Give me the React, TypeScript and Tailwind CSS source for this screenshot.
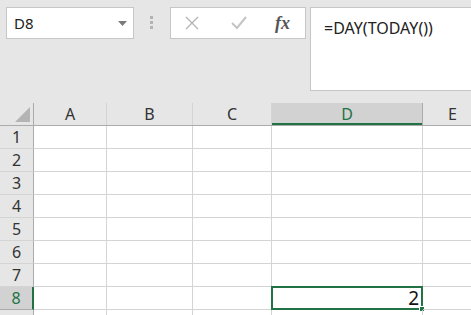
import React from 'react';

// ─── Sheet data ───────────────────────────────────────────────────────────────

const COLS = [
    { key: 'A', w: 'w-[73px]' },
    { key: 'B', w: 'w-[86px]' },
    { key: 'C', w: 'w-[79px]' },
    { key: 'D', w: 'w-[151px]' },
    { key: 'E', w: 'w-[60px]' },
];

const ROWS = [1, 2, 3, 4, 5, 6, 7, 8, 9];

const font = "font-['Noto_Sans','Noto_Sans_CJK_SC',sans-serif]";

// ─── Component ────────────────────────────────────────────────────────────────

const App: React.FC = () => {
    return (
        <div className={`w-[471px] h-[315px] overflow-hidden bg-[#e6e6e6] ${font}`}>

            {/* ── Formula bar ── */}
            <div className="h-[103px] flex items-start pl-[6px] pt-[7px]">
                {/* Name box */}
                <div className="w-[128px] h-[32px] shrink-0 bg-white border border-[#c6c6c6] flex items-center justify-between pl-[7px] pr-[6px]">
                    <span className="text-[15px] text-[#222] leading-none">D8</span>
                    <svg width="9" height="5" viewBox="0 0 9 5"><path d="M0 0h9L4.5 5z" fill="#7a7a7a" /></svg>
                </div>

                {/* Grip */}
                <div className="ml-[16px] mt-[9px] shrink-0 flex flex-col gap-[2px]">
                    <div className="w-[3px] h-[3px] bg-[#b3b3b3]" />
                    <div className="w-[3px] h-[3px] bg-[#b3b3b3]" />
                    <div className="w-[3px] h-[3px] bg-[#b3b3b3]" />
                </div>

                {/* Cancel / enter / fx */}
                <div className="ml-[17px] w-[136px] h-[32px] shrink-0 bg-white border border-[#c6c6c6] flex items-center">
                    <svg className="ml-[14px]" width="14" height="14" viewBox="0 0 14 14">
                        <path d="M1 1l12 12M13 1L1 13" stroke="#b4b4b4" strokeWidth="1.3" fill="none" />
                    </svg>
                    <svg className="ml-[32px]" width="16" height="14" viewBox="0 0 16 14">
                        <path d="M1 7l5 5L15 1" stroke="#c4c4c4" strokeWidth="2" fill="none" />
                    </svg>
                    <span className="ml-[28px] text-[18px] italic font-semibold text-[#555] leading-none font-['Liberation_Serif',serif]">fx</span>
                </div>

                {/* Formula input */}
                <div className="ml-[4px] w-[175px] h-[84px] shrink-0 bg-white border border-[#c6c6c6] pl-[13px] pt-[8px]">
                    <span className="text-[16px] text-[#222] leading-none">=DAY(TODAY())</span>
                </div>
            </div>

            {/* ── Grid ── */}
            <div className="bg-white">
                {/* Column headers */}
                <div className="flex h-[23px] bg-[#e6e6e6] border-b border-[#ababab]">
                    <div className="w-[34px] shrink-0 border-r border-[#ababab] flex items-end justify-end pr-[3px] pb-[3px]">
                        <svg width="15" height="15" viewBox="0 0 15 15"><path d="M15 0v15H0z" fill="#b4b4b4" /></svg>
                    </div>
                    {COLS.map((c) => (
                        <div
                            key={c.key}
                            className={`${c.w} shrink-0 border-r flex items-center justify-center text-[16px] leading-none ${c.key === 'D'
                                ? 'bg-[#d2d2d2] text-[#217346] border-[#ababab] shadow-[inset_0_-2px_0_#217346]'
                                : 'text-[#333] border-[#d4d4d4]'}`}
                        >
                            {c.key}
                        </div>
                    ))}
                </div>

                {/* Rows */}
                {ROWS.map((r) => (
                    <div key={r} className="flex h-[23px]">
                        <div
                            className={`w-[34px] shrink-0 border-b flex items-center justify-center text-[16px] leading-none ${r === 8
                                ? 'bg-[#d2d2d2] text-[#217346] border-[#ababab] border-r-2 border-r-[#217346]'
                                : 'bg-[#e6e6e6] text-[#333] border-[#d4d4d4] border-r border-r-[#ababab]'}`}
                        >
                            {r < 9 ? r : ''}
                        </div>
                        {COLS.map((c) => (
                            <div key={c.key} className={`${c.w} shrink-0 border-r border-b border-[#d4d4d4] relative`}>
                                {r === 8 && c.key === 'D' && (
                                    <div className="absolute -left-[1px] -top-[1px] w-[152px] h-[24px] border-2 border-[#217346] flex items-center justify-end pr-[2px]">
                                        <span className="text-[19px] text-[#111] leading-none">2</span>
                                        <div className="absolute -right-[4px] -bottom-[4px] w-[6px] h-[6px] bg-[#217346] border border-white" />
                                    </div>
                                )}
                            </div>
                        ))}
                    </div>
                ))}
            </div>
        </div>
    );
};

export default App;
